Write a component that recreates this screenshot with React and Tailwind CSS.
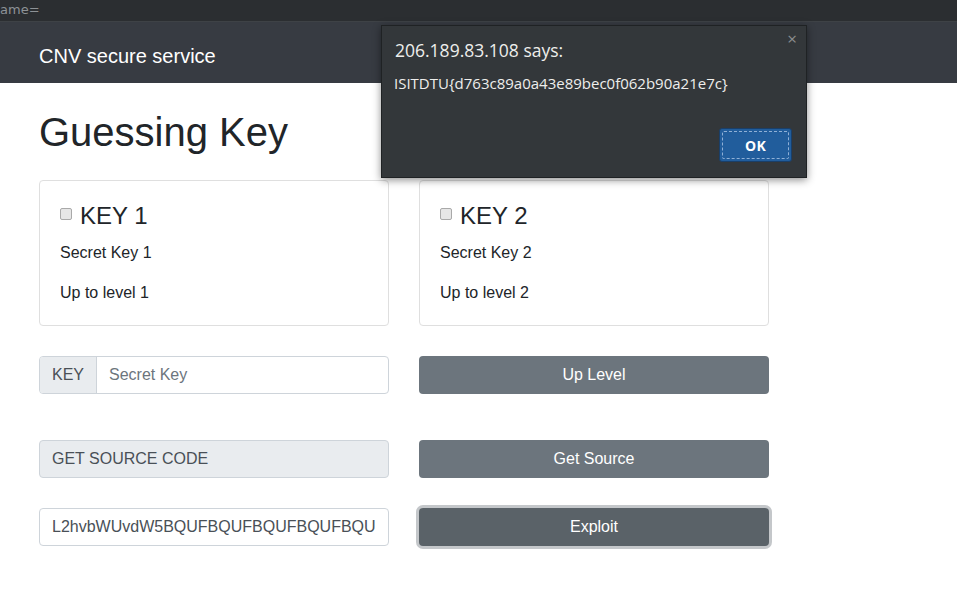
import { useState } from "react";

const sans = { fontFamily: '"Liberation Sans", Arial, sans-serif' };

function KeyCard({ num }) {
  return (
    <div className="w-[350px] h-[146px] border border-[#dfdfdf] rounded-[4px] px-[20px] pt-[20px]">
      <div className="flex items-center">
        <input
          type="checkbox"
          className="appearance-none w-[12px] h-[12px] mr-[8px] mb-[5px] rounded-[2px] bg-[#e6e6e6] border border-[#a9a9a9]"
        />
        <span className="text-[24px] leading-[30px] text-[#212529]">KEY {num}</span>
      </div>
      <p className="text-[16px] leading-[24px] text-[#212529] mt-[10px]">Secret Key {num}</p>
      <p className="text-[16px] leading-[24px] text-[#212529] mt-[16px]">Up to level {num}</p>
    </div>
  );
}

function AlertBox() {
  return (
    <div
      className="absolute left-[381px] top-[25px] w-[426px] h-[153px] bg-[#33373a] border border-[#1f2224] shadow-[0_2px_8px_rgba(0,0,0,0.45)] text-[#eeeeec]"
      style={{ fontFamily: '"Open Sans", "DejaVu Sans", sans-serif' }}
    >
      <div className="absolute right-[9px] top-[3px] text-[17px] text-[#8b8e8f] leading-[20px]">×</div>
      <div className="pl-[13px] pt-[11px] text-[17.5px] leading-[26px]">206.189.83.108 says:</div>
      <div className="pl-[12px] pt-[9px] text-[15px] leading-[22px]">ISITDTU{"{"}d763c89a0a43e89bec0f062b90a21e7c{"}"}</div>
      <div className="absolute right-[14px] bottom-[15px] w-[73px] h-[34px] rounded-[3px] bg-[#215d9c] border border-[#1a3f69] flex items-center justify-center">
        <div className="absolute inset-[2px] border border-dashed border-[#8fb0d6] rounded-[2px]"></div>
        <span className="text-[14px] font-bold text-white tracking-wide">OK</span>
      </div>
    </div>
  );
}

export default function App() {
  const [key, setKey] = useState("");

  return (
    <div className="relative w-[957px] h-[600px] bg-white overflow-hidden" style={sans}>
      <div className="h-[22px] bg-[#2b2e31] border-b border-[#3e4246] text-[13px] leading-[20px] text-[#8d9296]" style={{ fontFamily: '"DejaVu Sans", sans-serif' }}>
        ame=
      </div>
      <nav className="h-[61px] bg-[#373b42] flex items-center pl-[39px] pt-[6px]">
        <span className="text-[20px] text-white">CNV secure service</span>
      </nav>

      <div className="pl-[39px]">
        <h1 className="text-[40px] leading-[48px] text-[#212529] mt-[25px] mb-[24px]">Guessing Key</h1>

        <div className="flex gap-[30px]">
          <KeyCard num={1} />
          <KeyCard num={2} />
        </div>

        <div className="flex gap-[30px] mt-[30px]">
          <div className="w-[350px] h-[38px] flex border border-[#ced4da] rounded-[4px] overflow-hidden">
            <div className="w-[57px] bg-[#e9ecef] border-r border-[#ced4da] flex items-center pl-[12px] text-[16px] text-[#495057]">KEY</div>
            <input
              value={key}
              onChange={(e) => setKey(e.target.value)}
              placeholder="Secret Key"
              className="flex-1 px-[12px] text-[16px] text-[#495057] placeholder:text-[#6c757d] outline-none"
            />
          </div>
          <button className="w-[350px] h-[38px] rounded-[4px] bg-[#6c757d] text-white text-[16px]">Up Level</button>
        </div>

        <div className="flex gap-[30px] mt-[46px]">
          <div className="w-[350px] h-[38px] bg-[#e9ecef] border border-[#ced4da] rounded-[4px] flex items-center pl-[12px] text-[16px] text-[#495057]">
            GET SOURCE CODE
          </div>
          <button className="w-[350px] h-[38px] rounded-[4px] bg-[#6c757d] text-white text-[16px]">Get Source</button>
        </div>

        <div className="flex gap-[30px] mt-[30px]">
          <div className="w-[350px] h-[38px] border border-[#ced4da] rounded-[4px] flex items-center pl-[12px] text-[16px] text-[#495057] overflow-hidden whitespace-nowrap">
            L2hvbWUvdW5BQUFBQUFBQUFBQUFBQU
          </div>
          <button className="w-[350px] h-[38px] rounded-[4px] bg-[#5a6268] text-white text-[16px] ring-[3px] ring-[#c4c7ca]">Exploit</button>
        </div>
      </div>

      <AlertBox />
    </div>
  );
}
